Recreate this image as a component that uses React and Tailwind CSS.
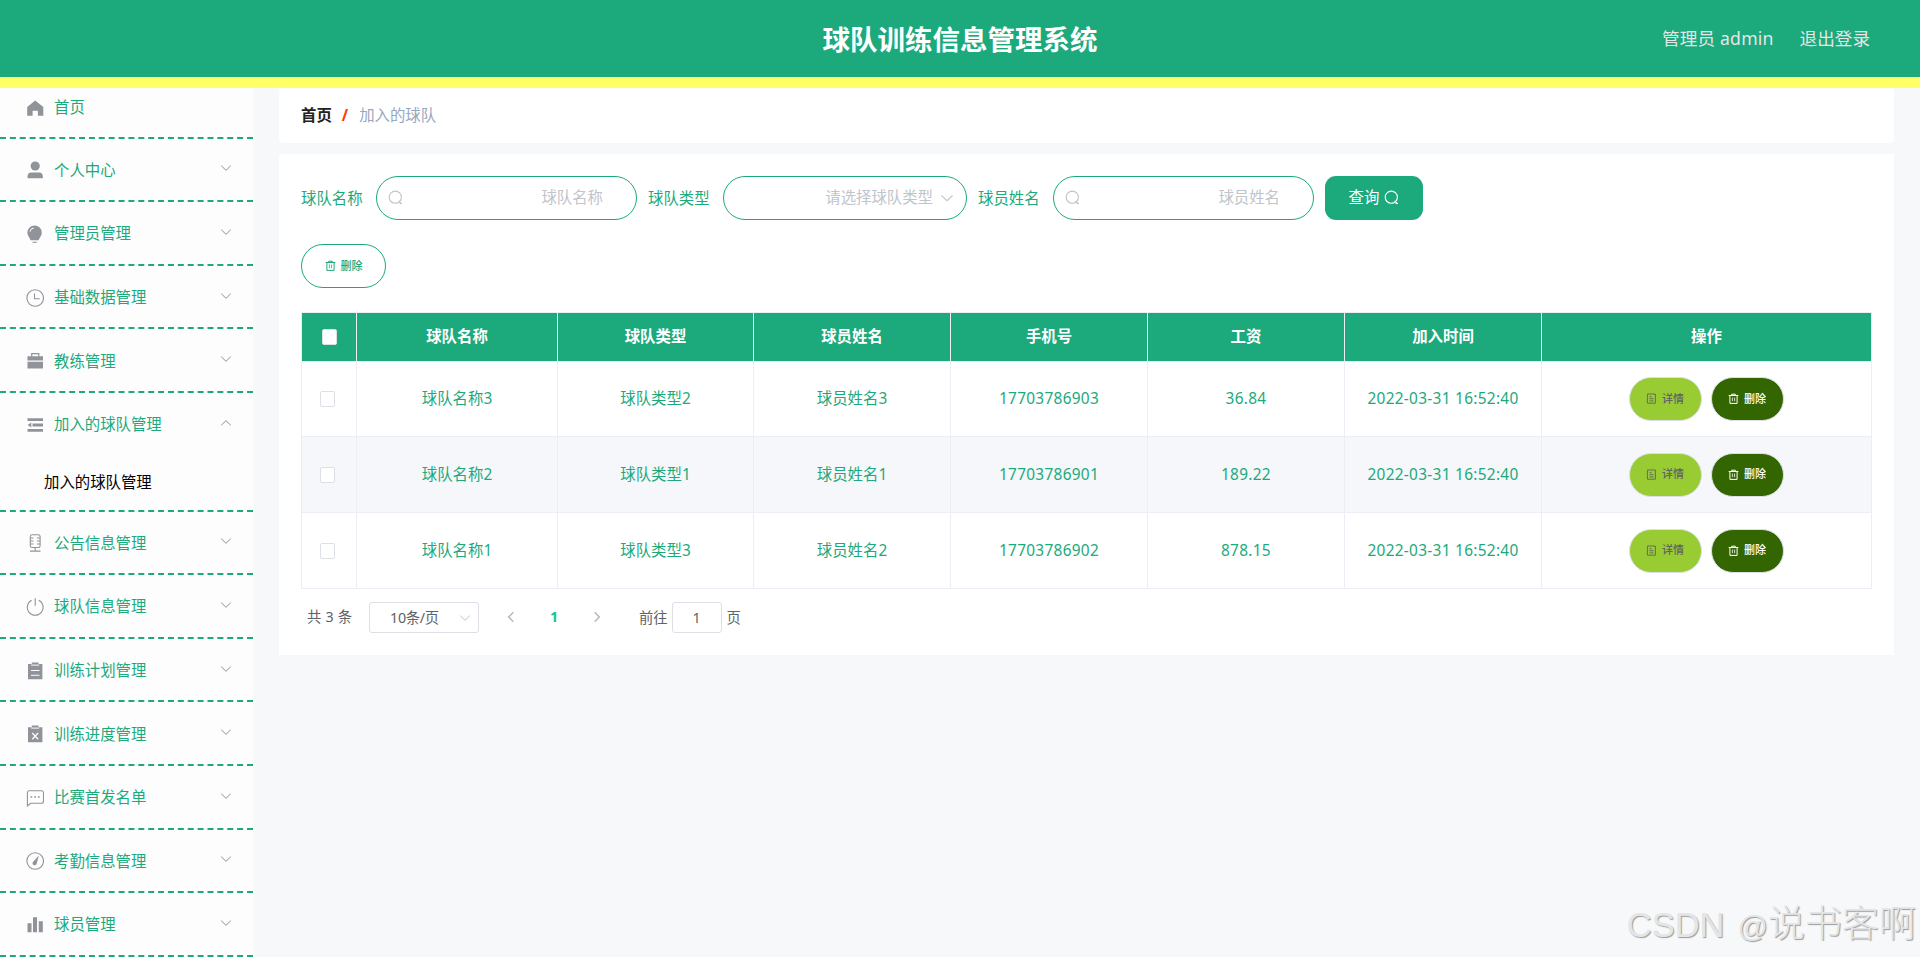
import clsx from 'clsx'

const ICONS = {
  home: (
    <path d="M9.200 1.500 17.300 8v8.700h-5.400v-4.900H6.600v4.900H1.200V8z" fill="currentColor" />
  ),
  user: (
    <g fill="currentColor">
      <circle cx="9.200" cy="5" r="4.600" />
      <path d="M1.600 17.300v-2c0-2.300 1.400-3.700 3.600-3.700h8c2.200 0 3.600 1.400 3.600 3.700v2z" />
    </g>
  ),
  bulb: (
    <g>
      <path d="M8.600.4a7.200 7.200 0 0 1 7.200 7.200c0 3.400-2.200 4.800-3.200 7.600h-8C3.600 12.400 1.400 11 1.400 7.600A7.200 7.200 0 0 1 8.600.4z" fill="currentColor" />
      <path d="M6.500 17.300h4.400" stroke="currentColor" />
      <path d="M4 6.800A4.200 4.200 0 0 1 7.800 3" stroke="#fdfdfd" fill="none" />
    </g>
  ),
  clock: (
    <g fill="none" stroke="currentColor" strokeWidth="1.1">
      <circle cx="9.200" cy="9" r="8.300" />
      <path d="M8.500 4.500v5.200h5.300" />
    </g>
  ),
  briefcase: (
    <g>
      <path d="M1.500 4.300H17v4.300H1.500zM1.500 9.700H17v6.900H1.500z" fill="currentColor" />
      <path d="M5.700 4.700V1.600h7.100v3.100" fill="none" stroke="currentColor" strokeWidth="1.200" />
    </g>
  ),
  fold: (
    <path d="M1.500 2.300H17v2.800H1.500zM6.500 7.600H17v2.800H6.500zM1.500 13H17v2.800H1.500zM5.300 6.600v4.800L1.600 9z" fill="currentColor" />
  ),
  mic: (
    <g fill="none" stroke="currentColor" strokeWidth="1.100">
      <rect x="4.300" y=".7" width="9.800" height="12.800" rx="1.800" />
      <path d="M4.300 4h3.200M4.300 7h3.200M4.300 10h3.200M10.900 4h3.200M10.900 7h3.200M10.900 10h3.200M9.200 13.500v3.400M4 17.100h10.500" />
    </g>
  ),
  power: (
    <g fill="none" stroke="currentColor" strokeWidth="1.100">
      <path d="M5.600 2.300a7.900 7.900 0 1 0 7.200 0M9.200.2v7.600" />
    </g>
  ),
  order: (
    <g>
      <path d="M2 2h3.800V.6h6.800V2h3.800v15.300H2z" fill="currentColor" />
      <path d="M5.200 3.100h8M5 8.500h8.500M5 13.300h8.500" stroke="#fdfdfd" />
    </g>
  ),
  release: (
    <g>
      <path d="M2 2.200h3.800V.6h6.800v1.600h3.800v15.100H2z" fill="currentColor" />
      <path d="M5.200 3.100h8" stroke="#fdfdfd" />
      <path d="m6.300 8 5.800 6.200M12.100 8l-5.800 6.200" stroke="#fdfdfd" strokeWidth="1.300" />
    </g>
  ),
  chat: (
    <g>
      <path d="M3 1.800h12.500c1.200 0 2 .8 2 2v8.500c0 1.200-.8 2-2 2H4.800L1.400 16.800v-13c0-1.200.6-2 1.600-2z" fill="none" stroke="currentColor" strokeWidth="1.100" />
      <path d="M4.500 7.300h1.700v1.500H4.500zM8.300 7.300H10v1.500H8.300zM12 7.300h1.700v1.500H12z" fill="currentColor" />
    </g>
  ),
  odometer: (
    <g>
      <circle cx="9.200" cy="9" r="8.300" fill="none" stroke="currentColor" strokeWidth="1.100" />
      <path d="m12.900 3.600-2.200 7.900a2.100 2.100 0 1 1-3.300-2z" fill="currentColor" />
    </g>
  ),
  chart: (
    <path d="M1.500 7.300h4v8.900h-4zM7 1.300h4v14.900H7zM12.800 5.200h4v11h-4z" fill="currentColor" />
  ),
}

const MENU = [
  { label: '首页', icon: 'home' },
  { label: '个人中心', icon: 'user' },
  { label: '管理员管理', icon: 'bulb' },
  { label: '基础数据管理', icon: 'clock' },
  { label: '教练管理', icon: 'briefcase' },
  { label: '加入的球队管理', icon: 'fold', children: ['加入的球队管理'] },
  { label: '公告信息管理', icon: 'mic' },
  { label: '球队信息管理', icon: 'power' },
  { label: '训练计划管理', icon: 'order' },
  { label: '训练进度管理', icon: 'release' },
  { label: '比赛首发名单', icon: 'chat' },
  { label: '考勤信息管理', icon: 'odometer' },
  { label: '球员管理', icon: 'chart' },
]

const COLUMNS = ['球队名称', '球队类型', '球员姓名', '手机号', '工资', '加入时间', '操作']

const ROWS = [
  ['球队名称3', '球队类型2', '球员姓名3', '17703786903', '36.84', '2022-03-31 16:52:40'],
  ['球队名称2', '球队类型1', '球员姓名1', '17703786901', '189.22', '2022-03-31 16:52:40'],
  ['球队名称1', '球队类型3', '球员姓名2', '17703786902', '878.15', '2022-03-31 16:52:40'],
]

const GRID = 'grid grid-cols-[55px_201px_196px_197px_197px_197px_197px_330px]'

function Chevron({ className }) {
  return (
    <svg viewBox="0 0 12 12" className={clsx('size-3', className)} fill="none" stroke="currentColor">
      <path d="m1.200 3.700 4.800 4.600 4.800-4.600" />
    </svg>
  )
}

function SearchIcon() {
  return (
    <svg viewBox="0 0 15 15" className="mb-px size-[15px]" fill="none" stroke="currentColor" strokeWidth="1.100">
      <circle cx="7.300" cy="7.200" r="6.100" />
      <path d="m10.700 10.900 2.900 2.900M11.600 13.500h2.400" />
    </svg>
  )
}

function TrashIcon() {
  return (
    <svg viewBox="0 0 11 11" className="mb-px size-[11px]" fill="none" stroke="currentColor">
      <path d="M.7 2.500h9.600M3.700 2V1.200h3.600V2M1.900 2.500v7.900h7.200V2.500" />
      <path d="M4.400 4.500v3.700M6.600 4.500v3.700" strokeWidth=".8" />
    </svg>
  )
}

function DocIcon() {
  return (
    <svg viewBox="0 0 11 11" className="mb-px size-[11px]" fill="none" stroke="currentColor" strokeWidth=".9">
      <path d="M1.400 1h8v9.200h-8zM3.500 3.700h2M3.500 5.700h4M3.500 7.900h4" />
    </svg>
  )
}

function Checkbox() {
  return <span className="block h-4 w-[15px] rounded-[2px] border border-[#dcdfe6] bg-white" />
}

function MenuItem({ item, first }) {
  return (
    <li className="border-b-2 border-dashed border-[#1ca97c]">
      <div className={clsx('flex items-center pl-[26px] pr-[21px]', first ? 'h-[48.6px] pb-[9px]' : 'h-[61.6px] pt-[2px]')}>
        <svg viewBox="0 0 18 18" className="size-[18px] text-[#909399]">{ICONS[item.icon]}</svg>
        <span className="ml-2.5">{item.label}</span>
        {!first && (
          <Chevron className={clsx('mb-1 ml-auto text-[#909399]', item.children && 'rotate-180')} />
        )}
      </div>
      {item.children?.map((c) => (
        <div key={c} className="flex h-[55px] items-center pl-11 text-black">{c}</div>
      ))}
    </li>
  )
}

function Field({ label, placeholder, select }) {
  return (
    <label className="flex items-center">
      <span className="w-[75px] pt-[2px]">{label}</span>
      <span
        className={clsx(
          'flex h-11 items-center rounded-[22px] border border-[#1ca97c] text-[#c0c4cc]',
          select ? 'w-[244px] justify-end pr-3' : 'w-[261px] justify-between pl-[11px] pr-[33px]',
        )}
      >
        {!select && <SearchIcon />}
        <span className="leading-5">{placeholder}</span>
        {select && <Chevron className="ml-[7px] size-[14px]" />}
      </span>
    </label>
  )
}

function RowButton({ className, icon, children }) {
  return (
    <button
      type="button"
      className={clsx('flex h-11 w-[73px] items-center justify-center gap-[5px] rounded-[22px] border border-[#dcdfe6] text-[11px] font-medium', className)}
    >
      {icon}
      {children}
    </button>
  )
}

export default function App() {
  return (
    <div className="relative flex h-[957px] flex-col overflow-hidden bg-[#f6f8fa] font-['Noto_Sans','Noto_Sans_CJK_SC',sans-serif] text-[15.4px] text-[#1ca97c]">
      <header className="grid h-[88px] shrink-0 grid-cols-3 items-center border-b-[11px] border-[#ffff66] bg-[#1ca97c]">
        <h1 className="col-start-2 pt-0.5 text-center text-[27.5px] font-bold text-white">球队训练信息管理系统</h1>
        <div className="flex justify-end gap-[26px] pr-[50px] text-[17.6px] text-[#e6e6e6]">
          <span className="tracking-[0.2px]">管理员 admin</span>
          <span>退出登录</span>
        </div>
      </header>

      <div className="flex min-h-0 flex-1">
        <aside className="w-[253px] shrink-0 bg-[#fdfdfd]">
          <ul>
            {MENU.map((item, i) => (
              <MenuItem key={item.label} item={item} first={i === 0} />
            ))}
          </ul>
        </aside>

        <main className="ml-[26px] w-[1615px]">
          <nav className="flex h-[55px] items-center rounded bg-white pl-[22px]">
            <span className="font-bold text-[#222]">首页</span>
            <span className="ml-[10px] mr-[11px] font-bold text-[#ff3b0a]">/</span>
            <span className="text-[#97a8be]">加入的球队</span>
          </nav>

          <section className="mt-[11px] h-[501px] bg-white px-[22px] pt-[22px]">
            <form className="flex gap-[11px]">
              <Field label="球队名称" placeholder="球队名称" />
              <Field label="球队类型" placeholder="请选择球队类型" select />
              <Field label="球员姓名" placeholder="球员姓名" />
              <button type="button" className="flex h-11 w-[98px] items-center justify-center gap-[5px] rounded-[11px] bg-[#1ca97c] text-white">
                查询
                <SearchIcon />
              </button>
            </form>

            <button type="button" className="mt-6 flex h-11 w-[85px] items-center justify-center gap-[5px] rounded-[22px] border border-[#1ca97c] text-[11px] font-medium">
              <TrashIcon />
              删除
            </button>

            <div className="mt-6 w-[1571px] border-l border-t border-[#ebeef5]">
              <div className={clsx(GRID, 'h-[49px] bg-[#1ca97c] font-bold text-white')}>
                <div className="flex items-center border-b border-r border-[#ebeef5] pl-5">
                  <Checkbox />
                </div>
                {COLUMNS.map((c) => (
                  <div key={c} className="flex items-center justify-center border-b border-r border-[#ebeef5]">{c}</div>
                ))}
              </div>
              {ROWS.map((row, i) => (
                <div key={row[0]} className={clsx(GRID, i === 0 ? 'h-[75px]' : 'h-[76px]', i === 1 && 'bg-[#f5f7fa]')}>
                  <div className="flex items-center border-b border-r border-[#ebeef5] pl-[18px]">
                    <Checkbox />
                  </div>
                  {row.map((v, j) => (
                    <div key={j} className={clsx('flex items-center justify-center border-b border-r border-[#ebeef5]', j > 2 && 'tracking-[0.3px]')}>
                      {v}
                    </div>
                  ))}
                  <div className="flex items-center justify-center gap-[9px] border-b border-r border-[#ebeef5] pr-px">
                    <RowButton className="bg-[#99cc33] text-[#606266]" icon={<DocIcon />}>详情</RowButton>
                    <RowButton className="bg-[#336600] text-white" icon={<TrashIcon />}>删除</RowButton>
                  </div>
                </div>
              ))}
            </div>

            <div className="mt-[13px] flex h-[31px] items-center pl-[5px] text-[14.3px] text-[#606266]">
              <span className="w-[63px] pb-px pl-px tracking-[0.2px]">共 3 条</span>
              <span className="flex h-[31px] w-[110px] items-center rounded-[3px] border border-[#dcdfe6] pl-[20px] pr-[7px]">
                <span className="tracking-[-0.3px]">10条/页</span>
                <Chevron className="ml-auto text-[#c0c4cc]" />
              </span>
              <Chevron className="mb-px ml-[26px] rotate-90 text-[#b4b8c0] [stroke-width:1.5px]" />
              <span className="w-[74px] pb-0.5 text-center font-bold text-[#0fc596]">1</span>
              <Chevron className="mb-px -rotate-90 text-[#b4b8c0] [stroke-width:1.5px]" />
              <span className="ml-[36px]">前往</span>
              <span className="ml-[4px] mr-[5px] flex h-[31px] w-[50px] items-center justify-center rounded-[3px] border border-[#dcdfe6]">1</span>
              <span>页</span>
            </div>
          </section>
        </main>
      </div>

      <div className="absolute bottom-[5px] right-[4px] flex items-baseline whitespace-nowrap font-['Liberation_Sans','Noto_Sans_CJK_SC',sans-serif] text-[37px] font-light text-[#e4e5e6] [text-shadow:1px_1px_1px_#999]">
        <span className="mr-[13px] text-[34.5px]">CSDN</span>
        <span className="text-[30px]">@</span>
        <span>说书客啊</span>
      </div>
    </div>
  )
}
